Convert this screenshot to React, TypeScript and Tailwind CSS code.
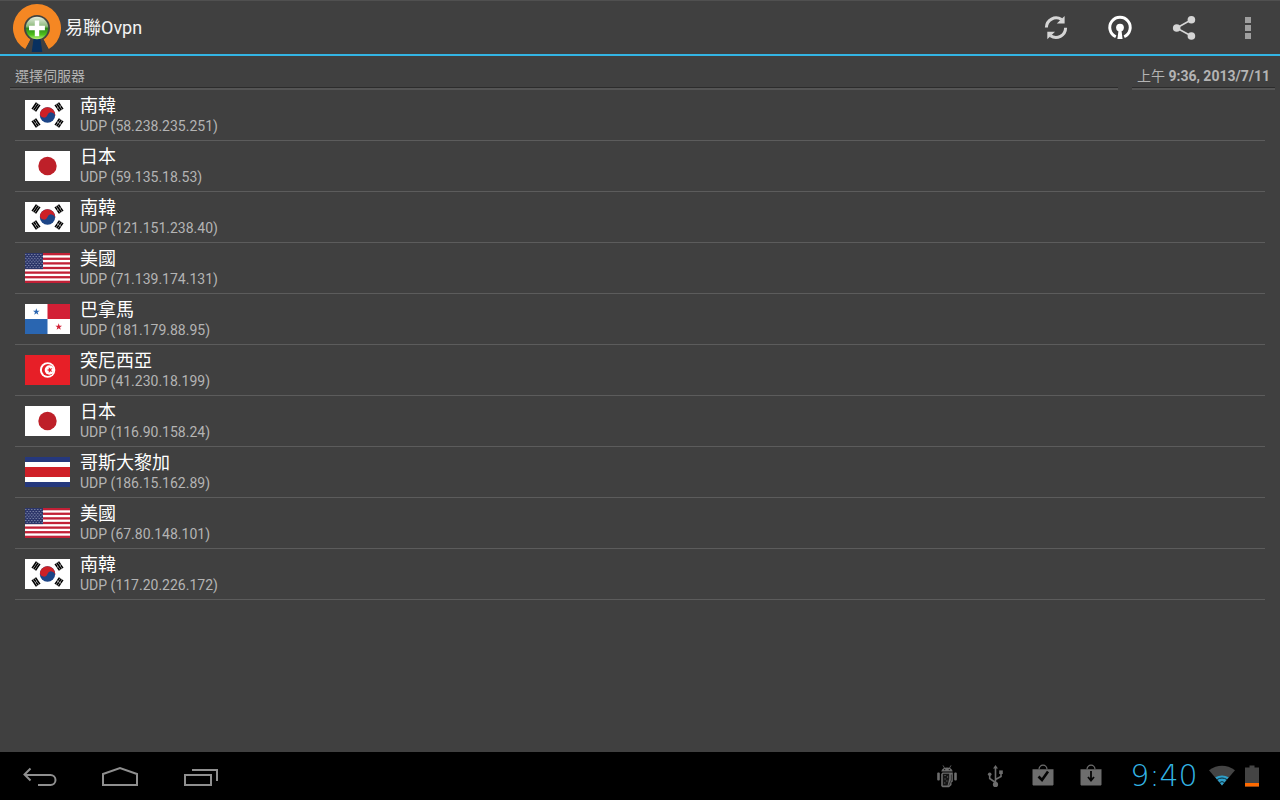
import React from 'react';

type Country = 'kr' | 'jp' | 'us' | 'pa' | 'tn' | 'cr';

interface Server {
  country: Country;
  name: string;
  ip: string;
}

const SERVERS: Server[] = [
  { country: 'kr', name: '南韓', ip: '58.238.235.251' },
  { country: 'jp', name: '日本', ip: '59.135.18.53' },
  { country: 'kr', name: '南韓', ip: '121.151.238.40' },
  { country: 'us', name: '美國', ip: '71.139.174.131' },
  { country: 'pa', name: '巴拿馬', ip: '181.179.88.95' },
  { country: 'tn', name: '突尼西亞', ip: '41.230.18.199' },
  { country: 'jp', name: '日本', ip: '116.90.158.24' },
  { country: 'cr', name: '哥斯大黎加', ip: '186.15.162.89' },
  { country: 'us', name: '美國', ip: '67.80.148.101' },
  { country: 'kr', name: '南韓', ip: '117.20.226.172' },
];

const STAR = '0,-1 0.24,-0.32 0.95,-0.31 0.38,0.12 0.59,0.81 0,0.4 -0.59,0.81 -0.38,0.12 -0.95,-0.31 -0.24,-0.32';

const Trigram: React.FC<{ x: number; y: number; angle: number; breaks: number[] }> = ({ x, y, angle, breaks }) => (
  <g transform={`translate(${x} ${y}) rotate(${angle})`}>
    {[-2, 0, 2].map((offset, i) => (
      <g key={offset}>
        <rect x="-3.9" y={offset - 0.85} width="7.8" height="1.7" fill="#000" />
        {breaks.includes(i) && <rect x="-0.3" y={offset - 0.9} width="0.6" height="1.8" fill="#fff" />}
      </g>
    ))}
  </g>
);

const flags: Record<Country, React.ReactNode> = {
  kr: (
    <>
      <rect width="45" height="30" fill="#fff" />
      <circle cx="22.5" cy="15" r="7.7" fill="#1c4587" />
      <path
        d="M14.8 15A7.7 7.7 0 0 1 30.2 15A3.85 3.85 0 0 0 22.5 15A3.85 3.85 0 0 1 14.8 15Z"
        transform="rotate(20 22.5 15)"
        fill="#cd2027"
      />
      <Trigram x={11} y={7} angle={-56} breaks={[]} />
      <Trigram x={34} y={7} angle={56} breaks={[0, 2]} />
      <Trigram x={11} y={23} angle={56} breaks={[1]} />
      <Trigram x={34} y={23} angle={-56} breaks={[0, 1, 2]} />
    </>
  ),
  jp: (
    <>
      <rect width="45" height="30" fill="#fff" />
      <circle cx="22.5" cy="15" r="9.2" fill="#be2029" />
    </>
  ),
  us: (
    <>
      <rect width="45" height="30" fill="#fff" />
      {[0, 1, 2, 3, 4, 5, 6].map((i) => (
        <rect key={i} y={(i * 60) / 13} width="45" height={30 / 13} fill="#c22036" />
      ))}
      <rect width="18" height="16.1" fill="#2c3669" />
      {[1.6, 3.4, 5.2, 7, 8.8, 10.6, 12.4, 14.2].map((y, row) =>
        [1.5, 4.5, 7.5, 10.5, 13.5, 16.5].map((x) => (
          <circle key={`${x}-${y}`} cx={row % 2 ? x + 0.6 : x - 0.6} cy={y} r="0.5" fill="#b9bfd6" />
        ))
      )}
    </>
  ),
  pa: (
    <>
      <rect width="45" height="30" fill="#fff" />
      <rect x="22.5" width="22.5" height="15" fill="#d21f35" />
      <rect y="15" width="22.5" height="15" fill="#2a66b1" />
      <polygon points={STAR} transform="translate(11.3 7.8) scale(3.5)" fill="#2a66b1" />
      <polygon points={STAR} transform="translate(33.7 22.8) scale(3.5)" fill="#d21f35" />
    </>
  ),
  tn: (
    <>
      <rect width="45" height="30" fill="#e71f27" />
      <circle cx="22.6" cy="15" r="7.7" fill="#fff" />
      <circle cx="22.8" cy="15" r="5.9" fill="#e71f27" />
      <circle cx="24.4" cy="15" r="4.7" fill="#fff" />
      <polygon points={STAR} transform="translate(24.8 15) rotate(-90) scale(3.2)" fill="#e71f27" />
    </>
  ),
  cr: (
    <>
      <rect width="45" height="30" fill="#25387d" />
      <rect y="5" width="45" height="20" fill="#fff" />
      <rect y="10" width="45" height="10" fill="#cf2028" />
    </>
  ),
};

const AppLogo = () => (
  <svg viewBox="0 0 48 48" className="h-12 w-12 shrink-0" aria-hidden="true">
    <defs>
      <linearGradient id="ball" x1="0" y1="0" x2="0" y2="1">
        <stop offset="0" stopColor="#e4ecdf" />
        <stop offset="0.42" stopColor="#8dba7c" />
        <stop offset="0.52" stopColor="#2f8a1c" />
        <stop offset="0.8" stopColor="#4fc01c" />
        <stop offset="1" stopColor="#b9ee7a" />
      </linearGradient>
    </defs>
    <path d="M12.2 44.9A24 24 0 1 1 35.8 44.9L30 35H18Z" fill="#f58723" />
    <path d="M18 34H30L36.5 48H11.5Z" fill="#404040" />
    <circle cx="24" cy="24" r="13" fill="#43443f" />
    <path d="M20.5 35H27.5L29.3 48H18.7Z" fill="#08305f" />
    <circle cx="24" cy="24" r="11.2" fill="url(#ball)" />
    <path d="M21.8 16.5h4.4v5.2h5.7v4.6h-5.7v6h-4.4v-6H16v-4.6h5.8z" fill="#fff" />
  </svg>
);

const RefreshIcon = () => (
  <svg viewBox="0 0 32 32" className="h-8 w-8" fill="none" stroke="#d5d5d5" strokeWidth="3">
    <path d="M6.4 15.6A9.7 9.7 0 0 1 21.5 7.6" />
    <path d="M25.6 15.8A9.7 9.7 0 0 1 10.5 23.8" />
    <path d="M24.6 4V11.6H16.8Z" fill="#d5d5d5" stroke="none" />
    <path d="M7.3 27.3V19.7H15Z" fill="#d5d5d5" stroke="none" />
  </svg>
);

const VpnIcon = () => (
  <svg viewBox="0 0 32 32" className="h-8 w-8">
    <path d="M11.8 24.8A10.2 10.2 0 1 1 20.2 24.8" fill="none" stroke="#fff" strokeWidth="2.9" />
    <circle cx="16" cy="15.6" r="3.9" fill="#fff" />
    <path d="M14.6 18H17.4L18.6 27H13.4Z" fill="#fff" />
  </svg>
);

const ShareIcon = () => (
  <svg viewBox="0 0 32 32" className="h-8 w-8" fill="#d5d5d5">
    <path d="M23.4 7.8L8.6 16L23.4 24" fill="none" stroke="#d5d5d5" strokeWidth="1.6" />
    <circle cx="23.4" cy="7.8" r="3.8" />
    <circle cx="8.7" cy="16" r="3.8" />
    <circle cx="23.4" cy="24" r="3.8" />
  </svg>
);

const OverflowIcon = () => (
  <svg viewBox="0 0 32 32" className="h-8 w-8" fill="#9f9f9f">
    <path d="M13 5h6v6h-6zM13 13h6v6h-6zM13 21h6v6h-6z" />
  </svg>
);

const actions = [
  { label: '重新整理', icon: <RefreshIcon /> },
  { label: 'OpenVPN', icon: <VpnIcon /> },
  { label: '分享', icon: <ShareIcon /> },
  { label: '更多選項', icon: <OverflowIcon /> },
];

const navButtons = [
  { label: '返回', path: 'M10.5 8.5L4.5 14.5L10.5 20.5M5 15H30.5A5 5 0 0 1 30.5 25H18' },
  { label: '主畫面', path: 'M3 25V14L20 8L37 14V25Z' },
  { label: '最近使用的應用程式', path: 'M5 15H31V25H5ZM12 10H37V21' },
];

const AndroidIcon = () => (
  <svg viewBox="0 0 24 24" className="h-6 w-6" fill="#6d6d6d">
    <path d="M6.3 7.6A5.8 5 0 0 1 17.7 7.6Z" />
    <path d="M8 1.4L9.5 4M16 1.4L14.5 4" stroke="#6d6d6d" strokeWidth="0.8" />
    <circle cx="9.7" cy="5.6" r="0.6" fill="#000" />
    <circle cx="14.3" cy="5.6" r="0.6" fill="#000" />
    <rect x="2.2" y="8.6" width="2.6" height="8" rx="1" />
    <rect x="19.2" y="8.6" width="2.6" height="8" rx="1" />
    <path d="M7.5 8.4H17.8V17.5L16.5 18.5V21L14 23.2H7.5L6.2 22V10Z" />
    <path d="M8.2 9.8H14.2V14.5L12.6 21.5H7.8V10.5Z" fill="#151515" />
    <path d="M9.5 11h1.1v1.1h-1.1zM12 12.5h1.1v1.1h-1.1zM9.5 14.5h1.1v1.1h-1.1zM11.3 16.5h1.1v1.1h-1.1zM9.2 18.5h1.1v1.1h-1.1z" />
    <path d="M16.3 10.5V16L13.8 21.5" fill="none" stroke="#151515" strokeWidth="0.7" />
  </svg>
);

const UsbIcon = () => (
  <svg viewBox="0 0 24 24" className="h-6 w-6" fill="none" stroke="#6d6d6d" strokeWidth="1.6">
    <path d="M12.5 20V3.5M12.5 18.5L6.7 14.5V9.5M12.5 15.5L18 12.5V8" />
    <path d="M12.5 1L15 4.6H10Z" fill="#6d6d6d" stroke="none" />
    <circle cx="12.5" cy="20.4" r="2.6" fill="#6d6d6d" stroke="none" />
    <circle cx="6.7" cy="10.2" r="1.8" fill="#6d6d6d" stroke="none" />
    <rect x="16.2" y="6.4" width="3.6" height="3.6" fill="#6d6d6d" stroke="none" />
  </svg>
);

const BagIcon: React.FC<{ mark: string; markWidth: number }> = ({ mark, markWidth }) => (
  <svg viewBox="0 0 24 24" className="h-6 w-6">
    <path d="M8 5.3A4 4.2 0 0 1 16 5.3" fill="none" stroke="#6d6d6d" strokeWidth="1.2" />
    <path d="M1.5 5.3H22.5V20.8L21.8 21.5H2.2L1.5 20.8Z" fill="#6d6d6d" />
    <path d={mark} fill="none" stroke="#050505" strokeWidth={markWidth} />
  </svg>
);

const WifiIcon = () => (
  <svg viewBox="0 0 26 22" className="h-[22px] w-[26px]">
    <path d="M13 20.5L0 5.3Q13 -3.6 26 5.3Z" fill="#444" />
    <path d="M13 20.5L6.3 12.2Q13 8.6 19.7 12.2Z" fill="#2e9fc9" />
    <path d="M8 14.6Q13 11.4 18 14.6M10.4 17.6Q13 15.6 15.6 17.6" fill="none" stroke="#0b2a36" strokeWidth="1" />
  </svg>
);

const BatteryIcon = () => (
  <svg viewBox="0 0 14 22" className="h-[22px] w-[14px]">
    <path d="M4.5 0.5H9.5V2.5H14V21.5H0V2.5H4.5Z" fill="#444" />
    <rect y="18" width="14" height="3.5" fill="#ff6a00" />
  </svg>
);

const App: React.FC = () => {
  return (
    <div className="flex min-h-screen flex-col bg-[#404040] font-[Roboto,'Noto_Sans_CJK_TC',sans-serif]">
      {/* Action bar */}
      <header className="flex h-14 items-center justify-between border-t border-b-2 border-t-[#505050] border-b-[#33b5e5] pl-[13px]">
        <div className="flex items-center gap-1">
          <AppLogo />
          <h1 className="text-lg leading-6 text-[#f3f3f3]">易聯Ovpn</h1>
        </div>
        <div className="flex">
          {actions.map((action) => (
            <button key={action.label} aria-label={action.label} className="flex h-12 w-16 items-center justify-center">
              {action.icon}
            </button>
          ))}
        </div>
      </header>

      <main className="flex-1">
        {/* Section headings */}
        <div className="flex gap-3.5 pt-2.5 pr-[5px] pl-2.5 text-sm leading-5 text-[#b4b4b4]">
          <h2 className="flex-1 border-b border-[#2c2c2c] px-[5px] pb-px shadow-[0_2px_0_#555555]">選擇伺服器</h2>
          <p className="border-b border-[#2c2c2c] px-[5px] pb-px shadow-[0_2px_0_#555555]">
            上午 <span className="font-bold">9:36, 2013/7/11</span>
          </p>
        </div>

        {/* Server list */}
        <ul className="mx-[15px] mt-0.5">
          {SERVERS.map((server) => (
            <li key={server.ip} className="border-b border-[#5c5c5c]">
              <button className="flex h-[50px] w-full items-center gap-2.5 px-2.5 text-left">
                <svg viewBox="0 0 45 30" className="h-[30px] w-[45px] shrink-0" aria-hidden="true">
                  {flags[server.country]}
                </svg>
                <span className="flex flex-col pb-0.5">
                  <span className="text-lg leading-6 text-white">{server.name}</span>
                  <span className="text-sm leading-4 text-[#b4b4b4]">UDP ({server.ip})</span>
                </span>
              </button>
            </li>
          ))}
        </ul>
      </main>

      {/* System bar */}
      <footer className="flex h-12 items-center justify-between bg-black">
        <nav className="flex">
          {navButtons.map((button) => (
            <button key={button.label} aria-label={button.label} className="flex h-12 w-20 items-center justify-center">
              <svg viewBox="0 0 40 32" className="h-8 w-10" fill="none" stroke="#8f8f8f" strokeWidth="2">
                <path d={button.path} />
              </svg>
            </button>
          ))}
        </nav>
        <div className="flex items-center pr-[21px]">
          <div className="flex items-center gap-6 pr-[21px]">
            <AndroidIcon />
            <UsbIcon />
            <BagIcon mark="M7.5 12.5L11 16L17 7.5" markWidth={2.6} />
            <BagIcon mark="M12 7V16M9 13L12 16.5L15 13" markWidth={1.8} />
          </div>
          <time className="w-20 text-center font-['DejaVu_Sans',sans-serif] text-[30px] leading-8 font-extralight text-[#33b5e5]">
            9:40
          </time>
          <div className="flex items-center gap-2.5 pl-[5px]">
            <WifiIcon />
            <BatteryIcon />
          </div>
        </div>
      </footer>
    </div>
  );
};

export default App;
